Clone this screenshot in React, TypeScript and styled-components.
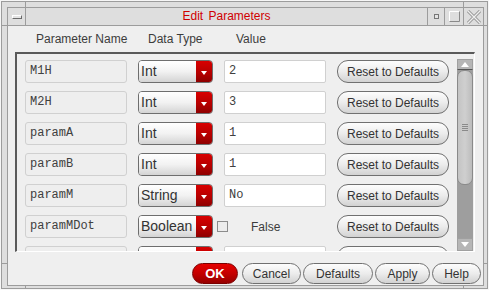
import React from 'react';
import styled, { createGlobalStyle } from 'styled-components';

const LINE = '#9c9c9c';

const GlobalStyle = createGlobalStyle`
  html, body {
    margin: 0;
    padding: 0;
    background: #dedede;
  }
  body {
    font-family: "Liberation Sans", Arial, sans-serif;
  }
`;

// window manager frame, the corner marks are drawn as background lines
const Frame = styled.div`
  width: 489px;
  height: 290px;
  box-sizing: border-box;
  border: 1px solid #f6f6f6;
  padding: 6px 4px 3px 6px;
  background:
    linear-gradient(${LINE}, ${LINE}) 24px 0 / 1px 100% no-repeat,
    linear-gradient(${LINE}, ${LINE}) 462px 0 / 1px 100% no-repeat,
    linear-gradient(${LINE}, ${LINE}) 0 24px / 100% 1px no-repeat,
    linear-gradient(${LINE}, ${LINE}) 0 262px / 100% 1px no-repeat,
    #dedede;
  box-shadow: inset 0 0 0 1px ${LINE};
`;

const Window = styled.div`
  height: 100%;
  box-sizing: border-box;
  border: 1px solid ${LINE};
  background: #efefef;
  display: flex;
  flex-direction: column;
`;

const TitleBar = styled.div`
  height: 17px;
  display: flex;
  background: #dedede;
  border-bottom: 1px solid ${LINE};
`;

const MenuBox = styled.div`
  width: 17px;
  border-right: 1px solid ${LINE};
  display: flex;
  align-items: center;
  justify-content: center;
`;

const MenuGlyph = styled.div`
  width: 8px;
  height: 2px;
  border: 1px solid;
  border-color: #fff #6a6a6a #6a6a6a #fff;
  background: #e4e4e4;
`;

const Title = styled.div`
  flex: 1;
  text-align: center;
  color: #d00000;
  font-size: 12px;
  line-height: 17px;
  word-spacing: 2px;
`;

const TitleButton = styled.div<{ $w: number }>`
  width: ${(p) => p.$w}px;
  border-left: 1px solid ${LINE};
  display: flex;
  align-items: center;
  justify-content: center;
`;

const Header = styled.div`
  height: 26px;
  display: flex;
  align-items: center;
  padding-left: 28px;
  font-size: 12px;
  color: #3c3c3c;
`;

const HeadCell = styled.div<{ $w?: number }>`
  width: ${(p) => (p.$w ? `${p.$w}px` : 'auto')};
`;

const ListBox = styled.div`
  margin-left: 7px;
  width: 460px;
  height: 200px;
  box-sizing: border-box;
  border-top: 2px solid #5a5a5a;
  border-left: 2px solid #5a5a5a;
  border-right: 1px solid #fff;
  border-bottom: 1px solid #fff;
  display: flex;
`;

const Rows = styled.div`
  flex: 1;
  overflow: hidden;
  padding: 6px 0 0 8px;
  display: flex;
  flex-direction: column;
  gap: 8px;
`;

const Row = styled.div`
  display: grid;
  grid-template-columns: 102px 75px 102px 112px;
  column-gap: 11px;
  height: 23px;
  flex-shrink: 0;
`;

const NameField = styled.div`
  box-sizing: border-box;
  height: 23px;
  border: 1px solid #d0d0d0;
  border-radius: 3px;
  background: #eeeeee;
  padding-left: 4px;
  font-family: "Liberation Mono", "Courier New", monospace;
  font-size: 12px;
  line-height: 21px;
  color: #404040;
`;

const ValueField = styled(NameField)`
  background: #fff;
  border-radius: 2px;
`;

const Select = styled.div`
  box-sizing: border-box;
  height: 23px;
  display: flex;
  border: 1px solid #6e6e6e;
  border-radius: 4px;
  overflow: hidden;
`;

const SelectLabel = styled.div`
  flex: 1;
  padding-left: 2px;
  background: linear-gradient(#ffffff, #f2f2f2 50%, #d4d4d4);
  font-size: 14px;
  line-height: 21px;
  color: #333;
`;

const SelectArrow = styled.div`
  width: 16px;
  background: linear-gradient(#d80000, #b30000 60%, #8e0000);
  display: flex;
  align-items: center;
  justify-content: center;
  padding-top: 2px;
  box-sizing: border-box;
  &::after {
    content: '';
    border-left: 3.5px solid transparent;
    border-right: 3.5px solid transparent;
    border-top: 4px solid #fff;
  }
`;

const BoolCell = styled.div`
  margin-left: -7px;
  display: flex;
  align-items: center;
  font-size: 12px;
  color: #3c3c3c;
`;

const Check = styled.div`
  width: 11px;
  height: 11px;
  box-sizing: border-box;
  border: 1px solid #8c8c8c;
  background: #ececec;
  margin-right: 23px;
`;

const Pill = styled.button<{ $w?: number; $h?: number; $primary?: boolean }>`
  width: ${(p) => (p.$w ? `${p.$w}px` : '100%')};
  height: ${(p) => p.$h ?? 21}px;
  box-sizing: border-box;
  margin: 0;
  padding: 0;
  border: 1px solid ${(p) => (p.$primary ? '#7a0000' : '#707070')};
  border-radius: 11px;
  background: ${(p) =>
    p.$primary
      ? 'linear-gradient(#e60000, #c00000 55%, #960000)'
      : 'linear-gradient(#fdfdfd, #ececec 50%, #d2d2d2)'};
  color: ${(p) => (p.$primary ? '#fff' : '#333')};
  font-family: "Liberation Sans", Arial, sans-serif;
  font-size: ${(p) => (p.$primary ? 13 : 12)}px;
  font-weight: ${(p) => (p.$primary ? 'bold' : 'normal')};
  cursor: pointer;
`;

const ScrollBar = styled.div`
  width: 16px;
  margin: 5px 1px 0 0;
  display: flex;
  flex-direction: column;
`;

const ScrollArrow = styled.div<{ $down?: boolean }>`
  height: ${(p) => (p.$down ? 13 : 11)}px;
  box-sizing: border-box;
  background: #b6b6b6;
  border: 1px solid #a0a0a0;
  ${(p) => (p.$down ? '' : 'border-bottom: 1px solid #555;')}
  display: flex;
  align-items: center;
  justify-content: center;
  &::after {
    content: '';
    border-left: 4px solid transparent;
    border-right: 4px solid transparent;
    ${(p) => (p.$down ? 'border-top' : 'border-bottom')}: 5px solid #fff;
  }
`;

const Track = styled.div`
  flex: 1;
  background: #9e9e9e;
  display: flex;
  flex-direction: column;
`;

const Thumb = styled.div`
  height: 115px;
  box-sizing: border-box;
  border: 1px solid #8a8a8a;
  border-radius: 7px;
  background: linear-gradient(90deg, #c4c4c4, #cfcfcf 50%, #bcbcbc);
  display: flex;
  align-items: center;
  justify-content: center;
`;

const Grip = styled.div`
  width: 6px;
  height: 7px;
  background: repeating-linear-gradient(#8a8a8a 0 1px, transparent 1px 2px);
`;

const ButtonBar = styled.div`
  flex: 1;
  display: flex;
  justify-content: flex-end;
  align-items: flex-start;
  gap: 2px;
  padding: 11px 2px 0 0;
`;

type Param = { name: string; type: string; value: string; bool?: boolean };

const params: Param[] = [
  { name: 'M1H', type: 'Int', value: '2' },
  { name: 'M2H', type: 'Int', value: '3' },
  { name: 'paramA', type: 'Int', value: '1' },
  { name: 'paramB', type: 'Int', value: '1' },
  { name: 'paramM', type: 'String', value: 'No' },
  { name: 'paramMDot', type: 'Boolean', value: 'False', bool: true },
];

const CloseIcon = () => (
  <svg width="14" height="14" viewBox="0 0 14 14">
    <path d="M1 1 L13 13 M13 1 L1 13" stroke="#9a9a9a" strokeWidth="3.2" />
    <path d="M1 1 L13 13 M13 1 L1 13" stroke="#efefef" strokeWidth="1.2" />
  </svg>
);

const App = () => {
  return (
    <>
      <GlobalStyle />
      <Frame>
        <Window>
          <TitleBar>
            <MenuBox>
              <MenuGlyph />
            </MenuBox>
            <Title>Edit Parameters</Title>
            <TitleButton $w={16}>
              <svg width="5" height="5">
                <rect x="0.5" y="0.5" width="4" height="4" fill="#e4e4e4" stroke="#777" />
              </svg>
            </TitleButton>
            <TitleButton $w={18}>
              <svg width="11" height="11">
                <path d="M0.5 10.5 V0.5 H10.5" fill="none" stroke="#fff" />
                <path d="M0.5 10.5 H10.5 V0.5" fill="none" stroke="#8a8a8a" />
              </svg>
            </TitleButton>
            <TitleButton $w={19}>
              <CloseIcon />
            </TitleButton>
          </TitleBar>
          <Header>
            <HeadCell $w={112}>Parameter Name</HeadCell>
            <HeadCell $w={88}>Data Type</HeadCell>
            <HeadCell>Value</HeadCell>
          </Header>
          <ListBox>
            <Rows>
              {params.map((p) => (
                <Row key={p.name}>
                  <NameField>{p.name}</NameField>
                  <Select>
                    <SelectLabel>{p.type}</SelectLabel>
                    <SelectArrow />
                  </Select>
                  {p.bool ? (
                    <BoolCell>
                      <Check />
                      {p.value}
                    </BoolCell>
                  ) : (
                    <ValueField>{p.value}</ValueField>
                  )}
                  <Pill $h={23}>Reset to Defaults</Pill>
                </Row>
              ))}
              {/* next row, scrolled out of view: only its top edge shows */}
              <Row>
                <NameField />
                <Select>
                  <SelectLabel />
                  <SelectArrow />
                </Select>
                <ValueField />
                <Pill $h={23} aria-label="Reset to Defaults" />
              </Row>
            </Rows>
            <ScrollBar>
              <ScrollArrow />
              <Track>
                <Thumb>
                  <Grip />
                </Thumb>
              </Track>
              <ScrollArrow $down />
            </ScrollBar>
          </ListBox>
          <ButtonBar>
            <Pill $w={46} $primary style={{ marginRight: 2 }}>
              OK
            </Pill>
            <Pill $w={59}>Cancel</Pill>
            <Pill $w={70}>Defaults</Pill>
            <Pill $w={55}>Apply</Pill>
            <Pill $w={49}>Help</Pill>
          </ButtonBar>
        </Window>
      </Frame>
    </>
  );
};

export default App;
